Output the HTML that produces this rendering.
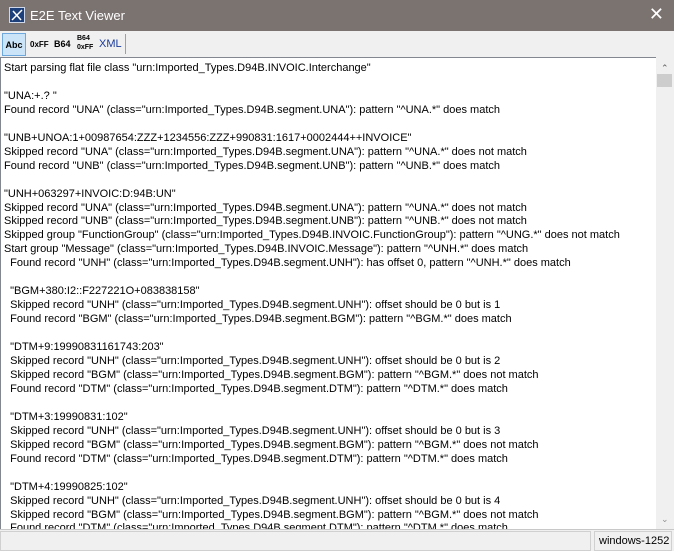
<!DOCTYPE html>
<html><head><style>
*{margin:0;padding:0;box-sizing:border-box}
html,body{width:674px;height:551px;overflow:hidden}
body{background:#f0f0f0;font-family:"Liberation Sans",sans-serif;position:relative}
#title{position:absolute;left:0;top:0;width:674px;height:31px;background:#7b7370;color:#fff;font-size:13px}
#title .t{position:absolute;left:30px;top:8px}
#title .x{position:absolute;right:10px;top:4px;font-size:18px}
#icon{position:absolute;left:9px;top:7px;width:16px;height:16px;background:#1d3f7a;border:1px solid #cfd8e8}
#tb{position:absolute;left:0;top:31px;width:674px;height:26px;background:#f0f0f0}
.b{position:absolute;top:2px;height:23px;font-size:9px;font-weight:bold;line-height:23px;color:#000}
#area{position:absolute;left:0;top:57px;width:674px;height:472px;background:#fff;border-top:1px solid #828790;border-left:1px solid #828790;overflow:hidden}
#txt{position:absolute;left:3px;top:4px;font-size:11px;line-height:13.95px;white-space:pre;color:#000}
#sb{position:absolute;right:0;top:57px;width:18px;height:472px;background:#f0f0f0}
#st{position:absolute;left:0;top:529px;width:674px;height:22px;background:#f0f0f0;border-top:1px solid #c8c8c8;overflow:hidden}
</style></head><body>
<div id="title"><div id="icon"><svg width="14" height="14"><path d="M2 12L12 2M3 3l8 9" stroke="#fff" stroke-width="1.5"/></svg></div><span class="t">E2E Text Viewer</span><span class="x">✕</span></div>
<div id="tb">
<div class="b" style="left:2px;width:24px;background:#cce4f7;border:1px solid #6fa8dc;text-align:center">Abc</div>
<div class="b" style="left:30px;font-size:8px">0xFF</div>
<div class="b" style="left:54px">B64</div>
<div class="b" style="left:77px;font-size:7px;line-height:9px;top:3px">B64<br>0xFF</div>
<div class="b" style="left:99px;color:#1a3a9a;font-weight:normal;font-size:11px">XML</div>
<div style="position:absolute;left:125px;top:3px;width:1px;height:20px;background:#a0a0a0"></div>
</div>
<div id="area"><div id="txt">Start parsing flat file class "urn:Imported_Types.D94B.INVOIC.Interchange"

"UNA:+.? "
Found record "UNA" (class="urn:Imported_Types.D94B.segment.UNA"): pattern "^UNA.*" does match

"UNB+UNOA:1+00987654:ZZZ+1234556:ZZZ+990831:1617+0002444++INVOICE"
Skipped record "UNA" (class="urn:Imported_Types.D94B.segment.UNA"): pattern "^UNA.*" does not match
Found record "UNB" (class="urn:Imported_Types.D94B.segment.UNB"): pattern "^UNB.*" does match

"UNH+063297+INVOIC:D:94B:UN"
Skipped record "UNA" (class="urn:Imported_Types.D94B.segment.UNA"): pattern "^UNA.*" does not match
Skipped record "UNB" (class="urn:Imported_Types.D94B.segment.UNB"): pattern "^UNB.*" does not match
Skipped group "FunctionGroup" (class="urn:Imported_Types.D94B.INVOIC.FunctionGroup"): pattern "^UNG.*" does not match
Start group "Message" (class="urn:Imported_Types.D94B.INVOIC.Message"): pattern "^UNH.*" does match
  Found record "UNH" (class="urn:Imported_Types.D94B.segment.UNH"): has offset 0, pattern "^UNH.*" does match

  "BGM+380:I2::F227221O+083838158"
  Skipped record "UNH" (class="urn:Imported_Types.D94B.segment.UNH"): offset should be 0 but is 1
  Found record "BGM" (class="urn:Imported_Types.D94B.segment.BGM"): pattern "^BGM.*" does match

  "DTM+9:19990831161743:203"
  Skipped record "UNH" (class="urn:Imported_Types.D94B.segment.UNH"): offset should be 0 but is 2
  Skipped record "BGM" (class="urn:Imported_Types.D94B.segment.BGM"): pattern "^BGM.*" does not match
  Found record "DTM" (class="urn:Imported_Types.D94B.segment.DTM"): pattern "^DTM.*" does match

  "DTM+3:19990831:102"
  Skipped record "UNH" (class="urn:Imported_Types.D94B.segment.UNH"): offset should be 0 but is 3
  Skipped record "BGM" (class="urn:Imported_Types.D94B.segment.BGM"): pattern "^BGM.*" does not match
  Found record "DTM" (class="urn:Imported_Types.D94B.segment.DTM"): pattern "^DTM.*" does match

  "DTM+4:19990825:102"
  Skipped record "UNH" (class="urn:Imported_Types.D94B.segment.UNH"): offset should be 0 but is 4
  Skipped record "BGM" (class="urn:Imported_Types.D94B.segment.BGM"): pattern "^BGM.*" does not match
  Found record "DTM" (class="urn:Imported_Types.D94B.segment.DTM"): pattern "^DTM.*" does match</div></div>
<div id="sb"><div style="position:absolute;left:5px;top:6px;font-size:9px;color:#606060">&#8963;</div><div style="position:absolute;left:1px;top:17px;width:15px;height:13px;background:#cdcdcd"></div><div style="position:absolute;left:5px;bottom:4px;font-size:9px;color:#909090">&#8964;</div></div>
<div id="st"><div style="position:absolute;left:0;top:1px;width:591px;height:20px;border:1px solid #d0d0d0"></div><div style="position:absolute;left:594px;top:1px;width:78px;height:20px;border:1px solid #d0d0d0;font-size:11px;line-height:18px;padding-left:4px;white-space:nowrap">windows-1252</div></div>
</body></html>
